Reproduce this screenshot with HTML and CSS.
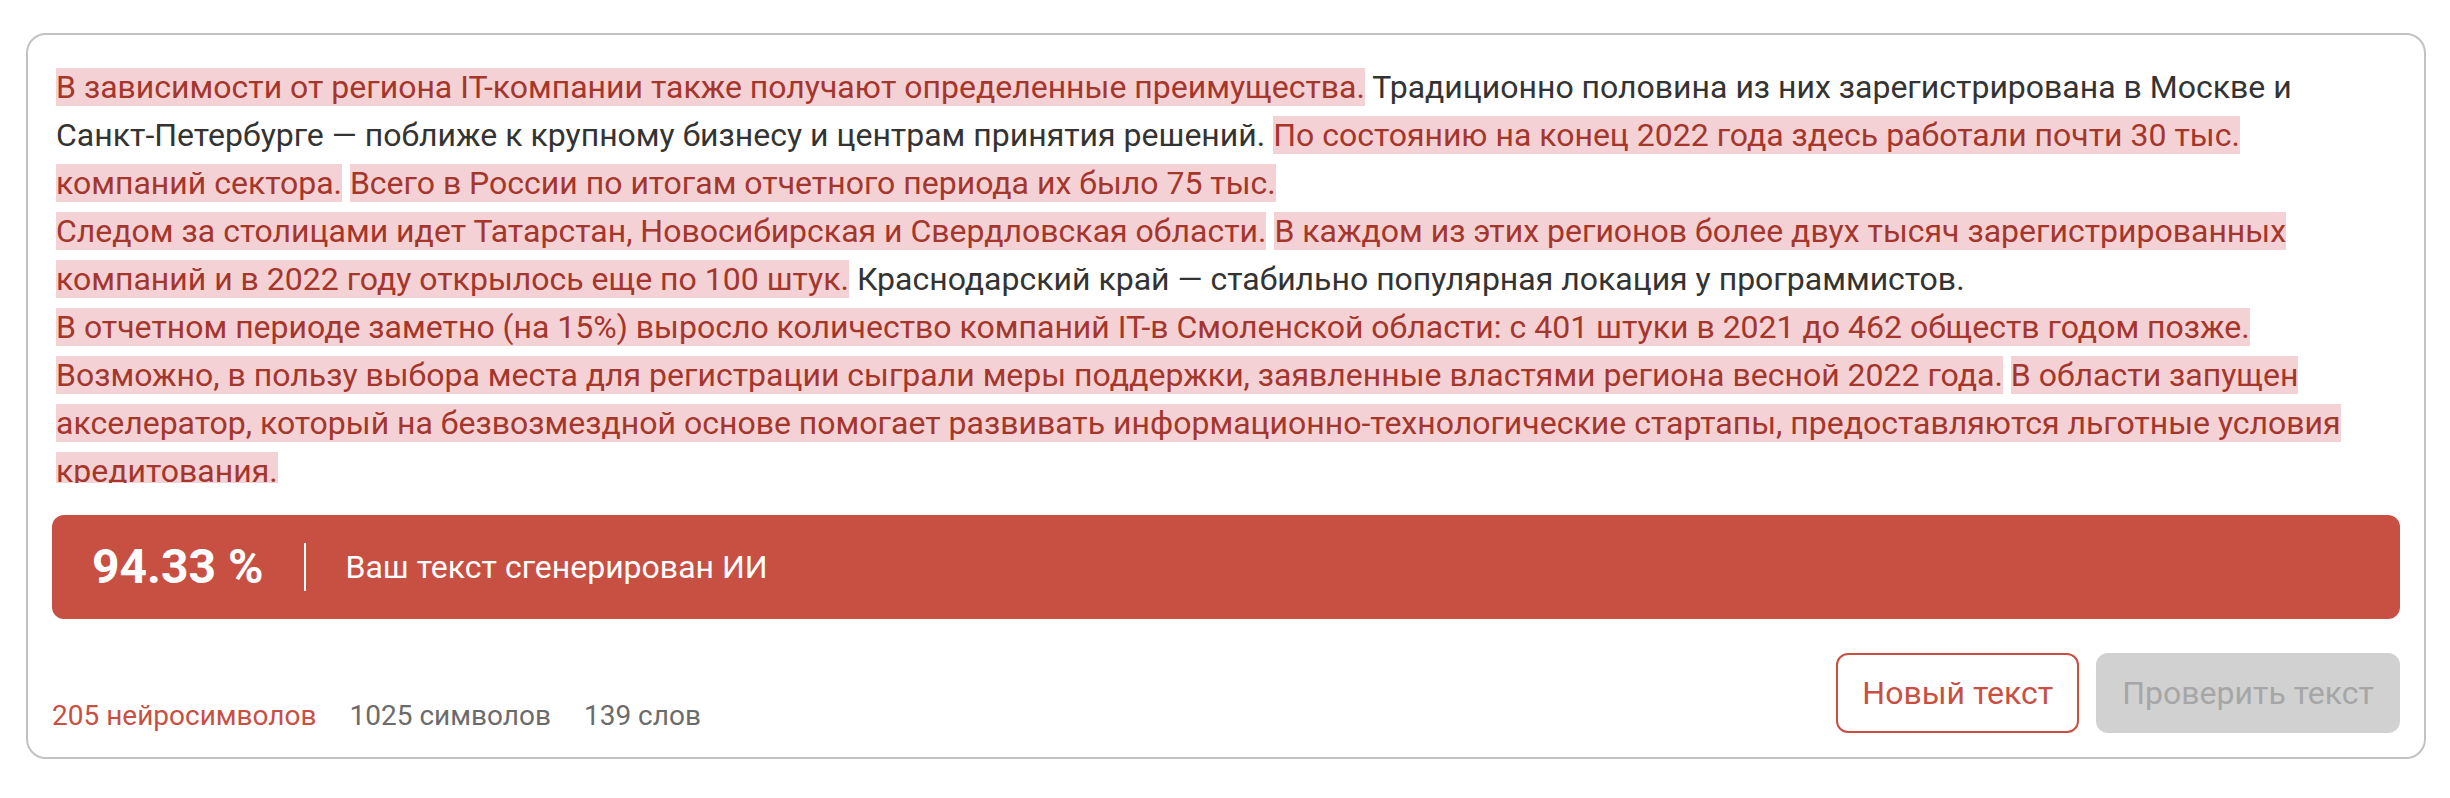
FILE: index.html
```html
<!DOCTYPE html>
<html lang="ru">
<head>
    <meta charset="UTF-8">
    <meta name="viewport" content="width=device-width, initial-scale=1.0">
    <title>Проверка текста</title>
    <link rel="stylesheet" href="styles.css">
</head>
<body>
    <div class="checker">
        <div class="result-text">
            <span class="ai">В зависимости от региона IT-компании также получают определенные преимущества.</span> Традиционно половина из них зарегистрирована в Москве и <span class="nobr">Санкт-Петербурге</span> — поближе к крупному бизнесу и центрам принятия решений. <span class="ai">По состоянию на конец 2022 года здесь работали почти 30 тыс. компаний сектора.</span> <span class="ai">Всего в России по итогам отчетного периода их было 75 тыс.</span><br>
            <span class="ai">Следом за столицами идет Татарстан, Новосибирская и Свердловская области.</span> <span class="ai">В каждом из этих регионов более двух тысяч зарегистрированных компаний и в 2022 году открылось еще по 100 штук.</span> Краснодарский край — стабильно популярная локация у программистов.<br>
            <span class="ai">В отчетном периоде заметно (на 15%) выросло количество компаний IT-в Смоленской области: с 401 штуки в 2021 до 462 обществ годом позже.</span><br>
            <span class="ai">Возможно, в пользу выбора места для регистрации сыграли меры поддержки, заявленные властями региона весной 2022 года.</span> <span class="ai">В области запущен акселератор, который на безвозмездной основе помогает развивать информационно-технологические стартапы, предоставляются льготные условия кредитования.</span>
        </div>

        <div class="verdict">
            <span class="percent">94.33 %</span>
            <span class="divider"></span>
            <span class="verdict-text">Ваш текст сгенерирован ИИ</span>
        </div>

        <div class="footer">
            <div class="stats">
                <span class="stat stat-neuro">205 нейросимволов</span>
                <span class="stat">1025 символов</span>
                <span class="stat">139 слов</span>
            </div>
            <div class="actions">
                <button type="button" class="btn btn-outline">Новый текст</button>
                <button type="button" class="btn btn-disabled" disabled>Проверить текст</button>
            </div>
        </div>
    </div>
</body>
</html>
```

FILE: styles.css
```css
* {
    box-sizing: border-box;
    margin: 0;
    padding: 0;
}

body {
    font-family: Roboto, "Liberation Sans", sans-serif;
    background-color: #fff;
    color: #333;
}

.checker {
    width: 2400px;
    margin: 33px 0 0 26px;
    padding: 24px;
    border: 2px solid #c2c2c2;
    border-radius: 20px;
}

.result-text {
    height: 424px;
    overflow-y: scroll;
    padding: 4px;
    font-size: 32px;
    line-height: 48px;
    color: #333;
}

.result-text::-webkit-scrollbar {
    width: 16px;
}

.result-text::-webkit-scrollbar-track {
    background-color: #d1d1d1;
    border-radius: 8px;
}

.result-text::-webkit-scrollbar-thumb {
    background-color: #878787;
    border-radius: 8px;
}

.ai {
    background-color: #f3d1d4;
    color: #a5362c;
}

.nobr {
    white-space: nowrap;
}

.verdict {
    display: flex;
    align-items: center;
    height: 104px;
    margin-top: 32px;
    padding: 0 40px;
    background-color: #c85043;
    border-radius: 12px;
    color: #fff;
}

.percent {
    font-size: 48px;
    font-weight: 700;
    line-height: 1;
}

.divider {
    width: 2px;
    height: 48px;
    margin: 0 40px;
    background-color: #fff;
}

.verdict-text {
    font-size: 32px;
}

.footer {
    display: flex;
    justify-content: space-between;
    align-items: flex-end;
    margin-top: 34px;
}

.stats {
    display: flex;
    gap: 33px;
    font-size: 28px;
    line-height: 34px;
}

.stat {
    color: #6b6b6b;
}

.stat-neuro {
    color: #c85043;
}

.actions {
    display: flex;
    gap: 17px;
}

.btn {
    height: 80px;
    padding: 0 24px;
    border: 2px solid transparent;
    border-radius: 12px;
    font-family: Roboto, "Liberation Sans", sans-serif;
    font-size: 32px;
    background: none;
    cursor: pointer;
}

.btn-outline {
    border-color: #c85043;
    color: #c85043;
    background-color: #fff;
}

.btn-disabled {
    background-color: #d1d1d1;
    color: #a6a6a6;
    cursor: default;
}
```
